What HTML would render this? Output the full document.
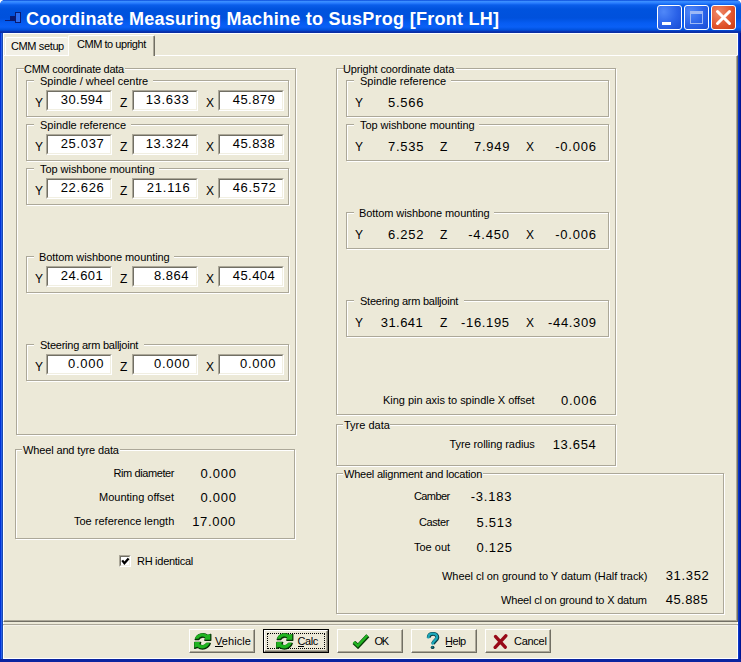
<!DOCTYPE html>
<html><head><meta charset="utf-8"><style>
html,body{margin:0;padding:0;width:741px;height:662px;overflow:hidden;background:#fff}
body{position:relative;font-family:"Liberation Sans",sans-serif}
.t{position:absolute;white-space:pre;font-family:"Liberation Sans",sans-serif}
</style></head><body>
<div style="position:absolute;left:0;top:0;width:741px;height:662px;background:#0A3FD8;border-radius:5px 5px 0 0"></div>
<div style="position:absolute;left:0;top:0;width:741px;height:33px;border-radius:5px 5px 0 0;background:linear-gradient(#0848D8 0px,#3A8EFF 1.5px,#2A7EFF 3px,#0A5EEA 5px,#0053DE 9px,#0051DC 18px,#065CF2 23px,#0A60F6 27px,#0050DC 30px,#0A34B0 31.5px,#0A2C9E 33px)"></div>
<div style="position:absolute;left:0px;top:33px;width:1px;height:629px;background:#0032D8"></div>
<div style="position:absolute;left:1px;top:33px;width:1px;height:629px;background:#2860E8"></div>
<div style="position:absolute;left:2px;top:33px;width:1px;height:629px;background:#1A4AB0"></div>
<div style="position:absolute;left:738px;top:33px;width:1px;height:629px;background:#0A36C8"></div>
<div style="position:absolute;left:739px;top:33px;width:1px;height:629px;background:#0024B0"></div>
<div style="position:absolute;left:740px;top:33px;width:1px;height:629px;background:#001494"></div>
<div style="position:absolute;left:0px;top:659px;width:741px;height:3px;background:#0A24A0"></div>
<div style="position:absolute;left:3px;top:33px;width:735px;height:626px;background:#ECE9D8;border:1px solid #fff;box-sizing:border-box"></div>
<div style="position:absolute;left:5px;top:20px;width:10px;height:1px;background:#0A1A70"></div>
<div style="position:absolute;left:10px;top:16px;width:5px;height:5px;background:#0A1A70"></div>
<div style="position:absolute;left:15px;top:12px;width:6px;height:11px;background:#2B6CF0;border:1px solid #0A1A70;box-sizing:border-box"></div>
<div class="t" style="left:26.00px;top:10px;font-size:18px;line-height:18px;font-weight:700;color:#fff;letter-spacing:0.265px;">Coordinate Measuring Machine to SusProg [Front LH]</div>
<div style="position:absolute;left:657px;top:5px;width:25px;height:25px;background:radial-gradient(circle at 25% 25%,#5088F8,#2A62E8 55%,#1A4CD4);border:1px solid #fff;border-radius:3px;box-sizing:border-box"></div>
<div style="position:absolute;left:684px;top:5px;width:25px;height:25px;background:radial-gradient(circle at 25% 25%,#5088F8,#2A62E8 55%,#1A4CD4);border:1px solid #fff;border-radius:3px;box-sizing:border-box"></div>
<div style="position:absolute;left:711px;top:5px;width:25px;height:25px;background:radial-gradient(circle at 30% 30%,#F08A6A,#E0532B 60%,#C83C14);border:1px solid #fff;border-radius:3px;box-sizing:border-box"></div>
<div style="position:absolute;left:662px;top:22px;width:9px;height:3px;background:#fff"></div>
<div style="position:absolute;left:690px;top:11px;width:13px;height:13px;border:1px solid #9DB8F5;border-top:3px solid #9DB8F5;box-sizing:border-box"></div>
<svg style="position:absolute;left:711px;top:5px" width="25" height="25"><path d="M6.5 6.5 L18.5 18.5 M18.5 6.5 L6.5 18.5" stroke="#fff" stroke-width="3" stroke-linecap="round"/></svg>
<div style="position:absolute;left:3px;top:55px;width:735px;height:567px;border-top:1px solid #fff;border-left:1px solid #fff;border-right:1px solid #716F64;border-bottom:1px solid #716F64;box-sizing:border-box"></div>
<div style="position:absolute;left:4px;top:56px;width:733px;height:565px;border-right:1px solid #ACA899;border-bottom:1px solid #ACA899;box-sizing:border-box"></div>
<div style="position:absolute;left:5px;top:37px;width:63px;height:18px;border-top:1px solid #fff;border-left:1px solid #fff;border-radius:2px 2px 0 0;box-sizing:border-box;background:#F2F0E6"></div>
<div class="t" style="left:11.00px;top:41px;font-size:11px;line-height:11px;letter-spacing:-0.375px;">CMM setup</div>
<div style="position:absolute;left:68px;top:35px;width:87px;height:21px;border-top:1px solid #fff;border-left:1px solid #fff;border-right:1px solid #716F64;box-sizing:border-box;background:#ECE9D8;border-radius:2px 2px 0 0"></div>
<div style="position:absolute;left:153px;top:36px;width:1px;height:20px;background:#ACA899"></div>
<div class="t" style="left:77.00px;top:39px;font-size:11px;line-height:11px;letter-spacing:-0.462px;">CMM to upright</div>
<div style="position:absolute;left:17px;top:69px;width:280px;height:367px;border:1px solid #fff;box-sizing:border-box"></div>
<div style="position:absolute;left:16px;top:68px;width:280px;height:367px;border:1px solid #ACA899;box-sizing:border-box"></div>
<div style="position:absolute;left:24px;top:62px;width:101px;height:13px;background:#ECE9D8"></div>
<div class="t" style="left:24.00px;top:64px;font-size:11px;line-height:11px;letter-spacing:-0.278px;">CMM coordinate data</div>
<div style="position:absolute;left:27px;top:81px;width:263px;height:37px;border:1px solid #fff;box-sizing:border-box"></div>
<div style="position:absolute;left:26px;top:80px;width:263px;height:37px;border:1px solid #ACA899;box-sizing:border-box"></div>
<div style="position:absolute;left:34px;top:75px;width:119px;height:11px;background:#ECE9D8"></div>
<div class="t" style="left:40.00px;top:76px;font-size:11px;line-height:11px;">Spindle / wheel centre</div>
<div class="t" style="left:35.00px;top:97px;font-size:12px;line-height:12px;">Y</div>
<div style="position:absolute;left:46px;top:90px;width:66px;height:21px;background:#fff;border-top:1px solid #ACA899;border-left:1px solid #ACA899;border-right:1px solid #fff;border-bottom:1px solid #fff;box-sizing:border-box"></div>
<div style="position:absolute;left:47px;top:91px;width:64px;height:19px;border-top:1px solid #716F64;border-left:1px solid #716F64;border-right:1px solid #F1EFE2;border-bottom:1px solid #F1EFE2;box-sizing:border-box"></div>
<div class="t" style="left:60.70px;top:93px;font-size:13px;line-height:13px;letter-spacing:0.460px;">30.594</div>
<div class="t" style="left:120.00px;top:97px;font-size:12px;line-height:12px;">Z</div>
<div style="position:absolute;left:132px;top:90px;width:66px;height:21px;background:#fff;border-top:1px solid #ACA899;border-left:1px solid #ACA899;border-right:1px solid #fff;border-bottom:1px solid #fff;box-sizing:border-box"></div>
<div style="position:absolute;left:133px;top:91px;width:64px;height:19px;border-top:1px solid #716F64;border-left:1px solid #716F64;border-right:1px solid #F1EFE2;border-bottom:1px solid #F1EFE2;box-sizing:border-box"></div>
<div class="t" style="left:145.70px;top:93px;font-size:13px;line-height:13px;letter-spacing:0.660px;">13.633</div>
<div class="t" style="left:206.00px;top:97px;font-size:12px;line-height:12px;">X</div>
<div style="position:absolute;left:218px;top:90px;width:66px;height:21px;background:#fff;border-top:1px solid #ACA899;border-left:1px solid #ACA899;border-right:1px solid #fff;border-bottom:1px solid #fff;box-sizing:border-box"></div>
<div style="position:absolute;left:219px;top:91px;width:64px;height:19px;border-top:1px solid #716F64;border-left:1px solid #716F64;border-right:1px solid #F1EFE2;border-bottom:1px solid #F1EFE2;box-sizing:border-box"></div>
<div class="t" style="left:232.70px;top:93px;font-size:13px;line-height:13px;letter-spacing:0.460px;">45.879</div>
<div style="position:absolute;left:27px;top:125px;width:263px;height:37px;border:1px solid #fff;box-sizing:border-box"></div>
<div style="position:absolute;left:26px;top:124px;width:263px;height:37px;border:1px solid #ACA899;box-sizing:border-box"></div>
<div style="position:absolute;left:34px;top:119px;width:97px;height:11px;background:#ECE9D8"></div>
<div class="t" style="left:40.00px;top:120px;font-size:11px;line-height:11px;">Spindle reference</div>
<div class="t" style="left:35.00px;top:141px;font-size:12px;line-height:12px;">Y</div>
<div style="position:absolute;left:46px;top:134px;width:66px;height:21px;background:#fff;border-top:1px solid #ACA899;border-left:1px solid #ACA899;border-right:1px solid #fff;border-bottom:1px solid #fff;box-sizing:border-box"></div>
<div style="position:absolute;left:47px;top:135px;width:64px;height:19px;border-top:1px solid #716F64;border-left:1px solid #716F64;border-right:1px solid #F1EFE2;border-bottom:1px solid #F1EFE2;box-sizing:border-box"></div>
<div class="t" style="left:60.70px;top:137px;font-size:13px;line-height:13px;letter-spacing:0.660px;">25.037</div>
<div class="t" style="left:120.00px;top:141px;font-size:12px;line-height:12px;">Z</div>
<div style="position:absolute;left:132px;top:134px;width:66px;height:21px;background:#fff;border-top:1px solid #ACA899;border-left:1px solid #ACA899;border-right:1px solid #fff;border-bottom:1px solid #fff;box-sizing:border-box"></div>
<div style="position:absolute;left:133px;top:135px;width:64px;height:19px;border-top:1px solid #716F64;border-left:1px solid #716F64;border-right:1px solid #F1EFE2;border-bottom:1px solid #F1EFE2;box-sizing:border-box"></div>
<div class="t" style="left:145.70px;top:137px;font-size:13px;line-height:13px;letter-spacing:0.660px;">13.324</div>
<div class="t" style="left:206.00px;top:141px;font-size:12px;line-height:12px;">X</div>
<div style="position:absolute;left:218px;top:134px;width:66px;height:21px;background:#fff;border-top:1px solid #ACA899;border-left:1px solid #ACA899;border-right:1px solid #fff;border-bottom:1px solid #fff;box-sizing:border-box"></div>
<div style="position:absolute;left:219px;top:135px;width:64px;height:19px;border-top:1px solid #716F64;border-left:1px solid #716F64;border-right:1px solid #F1EFE2;border-bottom:1px solid #F1EFE2;box-sizing:border-box"></div>
<div class="t" style="left:232.70px;top:137px;font-size:13px;line-height:13px;letter-spacing:0.460px;">45.838</div>
<div style="position:absolute;left:27px;top:169px;width:263px;height:37px;border:1px solid #fff;box-sizing:border-box"></div>
<div style="position:absolute;left:26px;top:168px;width:263px;height:37px;border:1px solid #ACA899;box-sizing:border-box"></div>
<div style="position:absolute;left:34px;top:163px;width:125px;height:11px;background:#ECE9D8"></div>
<div class="t" style="left:40.00px;top:164px;font-size:11px;line-height:11px;letter-spacing:-0.050px;">Top wishbone mounting</div>
<div class="t" style="left:35.00px;top:185px;font-size:12px;line-height:12px;">Y</div>
<div style="position:absolute;left:46px;top:178px;width:66px;height:21px;background:#fff;border-top:1px solid #ACA899;border-left:1px solid #ACA899;border-right:1px solid #fff;border-bottom:1px solid #fff;box-sizing:border-box"></div>
<div style="position:absolute;left:47px;top:179px;width:64px;height:19px;border-top:1px solid #716F64;border-left:1px solid #716F64;border-right:1px solid #F1EFE2;border-bottom:1px solid #F1EFE2;box-sizing:border-box"></div>
<div class="t" style="left:60.70px;top:181px;font-size:13px;line-height:13px;letter-spacing:0.660px;">22.626</div>
<div class="t" style="left:120.00px;top:185px;font-size:12px;line-height:12px;">Z</div>
<div style="position:absolute;left:132px;top:178px;width:66px;height:21px;background:#fff;border-top:1px solid #ACA899;border-left:1px solid #ACA899;border-right:1px solid #fff;border-bottom:1px solid #fff;box-sizing:border-box"></div>
<div style="position:absolute;left:133px;top:179px;width:64px;height:19px;border-top:1px solid #716F64;border-left:1px solid #716F64;border-right:1px solid #F1EFE2;border-bottom:1px solid #F1EFE2;box-sizing:border-box"></div>
<div class="t" style="left:146.70px;top:181px;font-size:13px;line-height:13px;letter-spacing:0.860px;">21.116</div>
<div class="t" style="left:206.00px;top:185px;font-size:12px;line-height:12px;">X</div>
<div style="position:absolute;left:218px;top:178px;width:66px;height:21px;background:#fff;border-top:1px solid #ACA899;border-left:1px solid #ACA899;border-right:1px solid #fff;border-bottom:1px solid #fff;box-sizing:border-box"></div>
<div style="position:absolute;left:219px;top:179px;width:64px;height:19px;border-top:1px solid #716F64;border-left:1px solid #716F64;border-right:1px solid #F1EFE2;border-bottom:1px solid #F1EFE2;box-sizing:border-box"></div>
<div class="t" style="left:232.70px;top:181px;font-size:13px;line-height:13px;letter-spacing:0.660px;">46.572</div>
<div style="position:absolute;left:27px;top:257px;width:263px;height:37px;border:1px solid #fff;box-sizing:border-box"></div>
<div style="position:absolute;left:26px;top:256px;width:263px;height:37px;border:1px solid #ACA899;box-sizing:border-box"></div>
<div style="position:absolute;left:34px;top:251px;width:140px;height:11px;background:#ECE9D8"></div>
<div class="t" style="left:39.00px;top:252px;font-size:11px;line-height:11px;letter-spacing:-0.087px;">Bottom wishbone mounting</div>
<div class="t" style="left:35.00px;top:273px;font-size:12px;line-height:12px;">Y</div>
<div style="position:absolute;left:46px;top:266px;width:66px;height:21px;background:#fff;border-top:1px solid #ACA899;border-left:1px solid #ACA899;border-right:1px solid #fff;border-bottom:1px solid #fff;box-sizing:border-box"></div>
<div style="position:absolute;left:47px;top:267px;width:64px;height:19px;border-top:1px solid #716F64;border-left:1px solid #716F64;border-right:1px solid #F1EFE2;border-bottom:1px solid #F1EFE2;box-sizing:border-box"></div>
<div class="t" style="left:60.70px;top:269px;font-size:13px;line-height:13px;letter-spacing:0.460px;">24.601</div>
<div class="t" style="left:120.00px;top:273px;font-size:12px;line-height:12px;">Z</div>
<div style="position:absolute;left:132px;top:266px;width:66px;height:21px;background:#fff;border-top:1px solid #ACA899;border-left:1px solid #ACA899;border-right:1px solid #fff;border-bottom:1px solid #fff;box-sizing:border-box"></div>
<div style="position:absolute;left:133px;top:267px;width:64px;height:19px;border-top:1px solid #716F64;border-left:1px solid #716F64;border-right:1px solid #F1EFE2;border-bottom:1px solid #F1EFE2;box-sizing:border-box"></div>
<div class="t" style="left:153.90px;top:269px;font-size:13px;line-height:13px;letter-spacing:0.525px;">8.864</div>
<div class="t" style="left:206.00px;top:273px;font-size:12px;line-height:12px;">X</div>
<div style="position:absolute;left:218px;top:266px;width:66px;height:21px;background:#fff;border-top:1px solid #ACA899;border-left:1px solid #ACA899;border-right:1px solid #fff;border-bottom:1px solid #fff;box-sizing:border-box"></div>
<div style="position:absolute;left:219px;top:267px;width:64px;height:19px;border-top:1px solid #716F64;border-left:1px solid #716F64;border-right:1px solid #F1EFE2;border-bottom:1px solid #F1EFE2;box-sizing:border-box"></div>
<div class="t" style="left:232.70px;top:269px;font-size:13px;line-height:13px;letter-spacing:0.460px;">45.404</div>
<div style="position:absolute;left:27px;top:345px;width:263px;height:37px;border:1px solid #fff;box-sizing:border-box"></div>
<div style="position:absolute;left:26px;top:344px;width:263px;height:37px;border:1px solid #ACA899;box-sizing:border-box"></div>
<div style="position:absolute;left:34px;top:339px;width:110px;height:11px;background:#ECE9D8"></div>
<div class="t" style="left:40.00px;top:340px;font-size:11px;line-height:11px;letter-spacing:-0.238px;">Steering arm balljoint</div>
<div class="t" style="left:35.00px;top:361px;font-size:12px;line-height:12px;">Y</div>
<div style="position:absolute;left:46px;top:354px;width:66px;height:21px;background:#fff;border-top:1px solid #ACA899;border-left:1px solid #ACA899;border-right:1px solid #fff;border-bottom:1px solid #fff;box-sizing:border-box"></div>
<div style="position:absolute;left:47px;top:355px;width:64px;height:19px;border-top:1px solid #716F64;border-left:1px solid #716F64;border-right:1px solid #F1EFE2;border-bottom:1px solid #F1EFE2;box-sizing:border-box"></div>
<div class="t" style="left:67.90px;top:357px;font-size:13px;line-height:13px;letter-spacing:0.775px;">0.000</div>
<div class="t" style="left:120.00px;top:361px;font-size:12px;line-height:12px;">Z</div>
<div style="position:absolute;left:132px;top:354px;width:66px;height:21px;background:#fff;border-top:1px solid #ACA899;border-left:1px solid #ACA899;border-right:1px solid #fff;border-bottom:1px solid #fff;box-sizing:border-box"></div>
<div style="position:absolute;left:133px;top:355px;width:64px;height:19px;border-top:1px solid #716F64;border-left:1px solid #716F64;border-right:1px solid #F1EFE2;border-bottom:1px solid #F1EFE2;box-sizing:border-box"></div>
<div class="t" style="left:153.90px;top:357px;font-size:13px;line-height:13px;letter-spacing:0.775px;">0.000</div>
<div class="t" style="left:206.00px;top:361px;font-size:12px;line-height:12px;">X</div>
<div style="position:absolute;left:218px;top:354px;width:66px;height:21px;background:#fff;border-top:1px solid #ACA899;border-left:1px solid #ACA899;border-right:1px solid #fff;border-bottom:1px solid #fff;box-sizing:border-box"></div>
<div style="position:absolute;left:219px;top:355px;width:64px;height:19px;border-top:1px solid #716F64;border-left:1px solid #716F64;border-right:1px solid #F1EFE2;border-bottom:1px solid #F1EFE2;box-sizing:border-box"></div>
<div class="t" style="left:239.90px;top:357px;font-size:13px;line-height:13px;letter-spacing:0.775px;">0.000</div>
<div style="position:absolute;left:337px;top:69px;width:280px;height:347px;border:1px solid #fff;box-sizing:border-box"></div>
<div style="position:absolute;left:336px;top:68px;width:280px;height:347px;border:1px solid #ACA899;box-sizing:border-box"></div>
<div style="position:absolute;left:344px;top:62px;width:112px;height:13px;background:#ECE9D8"></div>
<div class="t" style="left:343.00px;top:64px;font-size:11px;line-height:11px;letter-spacing:-0.136px;">Upright coordinate data</div>
<div style="position:absolute;left:347px;top:81px;width:263px;height:37px;border:1px solid #fff;box-sizing:border-box"></div>
<div style="position:absolute;left:346px;top:80px;width:263px;height:37px;border:1px solid #ACA899;box-sizing:border-box"></div>
<div style="position:absolute;left:354px;top:75px;width:97px;height:11px;background:#ECE9D8"></div>
<div class="t" style="left:360.00px;top:76px;font-size:11px;line-height:11px;">Spindle reference</div>
<div class="t" style="left:355.00px;top:97px;font-size:12px;line-height:12px;">Y</div>
<div class="t" style="left:387.90px;top:96px;font-size:13px;line-height:13px;letter-spacing:0.775px;">5.566</div>
<div style="position:absolute;left:347px;top:125px;width:263px;height:37px;border:1px solid #fff;box-sizing:border-box"></div>
<div style="position:absolute;left:346px;top:124px;width:263px;height:37px;border:1px solid #ACA899;box-sizing:border-box"></div>
<div style="position:absolute;left:354px;top:119px;width:125px;height:11px;background:#ECE9D8"></div>
<div class="t" style="left:360.00px;top:120px;font-size:11px;line-height:11px;letter-spacing:-0.050px;">Top wishbone mounting</div>
<div class="t" style="left:355.00px;top:141px;font-size:12px;line-height:12px;">Y</div>
<div class="t" style="left:387.90px;top:140px;font-size:13px;line-height:13px;letter-spacing:0.775px;">7.535</div>
<div class="t" style="left:440.00px;top:141px;font-size:12px;line-height:12px;">Z</div>
<div class="t" style="left:473.90px;top:140px;font-size:13px;line-height:13px;letter-spacing:0.775px;">7.949</div>
<div class="t" style="left:526.00px;top:141px;font-size:12px;line-height:12px;">X</div>
<div class="t" style="left:555.30px;top:140px;font-size:13px;line-height:13px;letter-spacing:0.740px;">-0.006</div>
<div style="position:absolute;left:347px;top:213px;width:263px;height:37px;border:1px solid #fff;box-sizing:border-box"></div>
<div style="position:absolute;left:346px;top:212px;width:263px;height:37px;border:1px solid #ACA899;box-sizing:border-box"></div>
<div style="position:absolute;left:354px;top:207px;width:140px;height:11px;background:#ECE9D8"></div>
<div class="t" style="left:359.00px;top:208px;font-size:11px;line-height:11px;letter-spacing:-0.087px;">Bottom wishbone mounting</div>
<div class="t" style="left:355.00px;top:229px;font-size:12px;line-height:12px;">Y</div>
<div class="t" style="left:387.90px;top:228px;font-size:13px;line-height:13px;letter-spacing:0.775px;">6.252</div>
<div class="t" style="left:440.00px;top:229px;font-size:12px;line-height:12px;">Z</div>
<div class="t" style="left:468.30px;top:228px;font-size:13px;line-height:13px;letter-spacing:0.740px;">-4.450</div>
<div class="t" style="left:526.00px;top:229px;font-size:12px;line-height:12px;">X</div>
<div class="t" style="left:555.30px;top:228px;font-size:13px;line-height:13px;letter-spacing:0.740px;">-0.006</div>
<div style="position:absolute;left:347px;top:301px;width:263px;height:37px;border:1px solid #fff;box-sizing:border-box"></div>
<div style="position:absolute;left:346px;top:300px;width:263px;height:37px;border:1px solid #ACA899;box-sizing:border-box"></div>
<div style="position:absolute;left:354px;top:295px;width:110px;height:11px;background:#ECE9D8"></div>
<div class="t" style="left:360.00px;top:296px;font-size:11px;line-height:11px;letter-spacing:-0.238px;">Steering arm balljoint</div>
<div class="t" style="left:355.00px;top:317px;font-size:12px;line-height:12px;">Y</div>
<div class="t" style="left:380.70px;top:316px;font-size:13px;line-height:13px;letter-spacing:0.460px;">31.641</div>
<div class="t" style="left:440.00px;top:317px;font-size:12px;line-height:12px;">Z</div>
<div class="t" style="left:461.10px;top:316px;font-size:13px;line-height:13px;letter-spacing:0.650px;">-16.195</div>
<div class="t" style="left:526.00px;top:317px;font-size:12px;line-height:12px;">X</div>
<div class="t" style="left:548.10px;top:316px;font-size:13px;line-height:13px;letter-spacing:0.650px;">-44.309</div>
<div class="t" style="left:383.00px;top:395px;font-size:11px;line-height:11px;letter-spacing:-0.031px;">King pin axis to spindle X offset</div>
<div class="t" style="left:560.90px;top:394px;font-size:13px;line-height:13px;letter-spacing:0.775px;">0.006</div>
<div style="position:absolute;left:337px;top:425px;width:280px;height:42px;border:1px solid #fff;box-sizing:border-box"></div>
<div style="position:absolute;left:336px;top:424px;width:280px;height:42px;border:1px solid #ACA899;box-sizing:border-box"></div>
<div style="position:absolute;left:343px;top:418px;width:47px;height:12px;background:#ECE9D8"></div>
<div class="t" style="left:344.00px;top:420px;font-size:11px;line-height:11px;">Tyre data</div>
<div class="t" style="left:449.50px;top:439px;font-size:11px;line-height:11px;letter-spacing:-0.083px;">Tyre rolling radius</div>
<div class="t" style="left:552.70px;top:438px;font-size:13px;line-height:13px;letter-spacing:0.660px;">13.654</div>
<div style="position:absolute;left:337px;top:474px;width:388px;height:141px;border:1px solid #fff;box-sizing:border-box"></div>
<div style="position:absolute;left:336px;top:473px;width:388px;height:141px;border:1px solid #ACA899;box-sizing:border-box"></div>
<div style="position:absolute;left:343px;top:467px;width:140px;height:12px;background:#ECE9D8"></div>
<div class="t" style="left:344.00px;top:469px;font-size:11px;line-height:11px;letter-spacing:-0.222px;">Wheel alignment and location</div>
<div class="t" style="left:414.00px;top:491px;font-size:11px;line-height:11px;letter-spacing:-0.600px;">Camber</div>
<div class="t" style="left:470.80px;top:490px;font-size:13px;line-height:13px;letter-spacing:0.740px;">-3.183</div>
<div class="t" style="left:419.00px;top:517px;font-size:11px;line-height:11px;letter-spacing:-0.400px;">Caster</div>
<div class="t" style="left:476.40px;top:516px;font-size:13px;line-height:13px;letter-spacing:0.775px;">5.513</div>
<div class="t" style="left:414.00px;top:542px;font-size:11px;line-height:11px;">Toe out</div>
<div class="t" style="left:476.40px;top:541px;font-size:13px;line-height:13px;letter-spacing:0.775px;">0.125</div>
<div class="t" style="left:442.00px;top:571px;font-size:11px;line-height:11px;letter-spacing:-0.049px;">Wheel cl on ground to Y datum (Half track)</div>
<div class="t" style="left:665.70px;top:569px;font-size:13px;line-height:13px;letter-spacing:0.660px;">31.352</div>
<div class="t" style="left:501.00px;top:595px;font-size:11px;line-height:11px;letter-spacing:-0.179px;">Wheel cl on ground to X datum</div>
<div class="t" style="left:665.70px;top:593px;font-size:13px;line-height:13px;letter-spacing:0.460px;">45.885</div>
<div style="position:absolute;left:16px;top:450px;width:280px;height:90px;border:1px solid #fff;box-sizing:border-box"></div>
<div style="position:absolute;left:15px;top:449px;width:280px;height:90px;border:1px solid #ACA899;box-sizing:border-box"></div>
<div style="position:absolute;left:22px;top:443px;width:98px;height:12px;background:#ECE9D8"></div>
<div class="t" style="left:23.00px;top:445px;font-size:11px;line-height:11px;letter-spacing:-0.139px;">Wheel and tyre data</div>
<div class="t" style="left:113.50px;top:468px;font-size:11px;line-height:11px;letter-spacing:-0.409px;">Rim diameter</div>
<div class="t" style="left:200.40px;top:467px;font-size:13px;line-height:13px;letter-spacing:0.775px;">0.000</div>
<div class="t" style="left:99.00px;top:492px;font-size:11px;line-height:11px;">Mounting offset</div>
<div class="t" style="left:200.40px;top:491px;font-size:13px;line-height:13px;letter-spacing:0.775px;">0.000</div>
<div class="t" style="left:74.00px;top:516px;font-size:11px;line-height:11px;">Toe reference length</div>
<div class="t" style="left:192.20px;top:515px;font-size:13px;line-height:13px;letter-spacing:0.660px;">17.000</div>
<div style="position:absolute;left:119px;top:555px;width:12px;height:12px;background:#fff;border-top:1px solid #ACA899;border-left:1px solid #ACA899;border-right:1px solid #fff;border-bottom:1px solid #fff;box-sizing:border-box"></div>
<div style="position:absolute;left:120px;top:556px;width:10px;height:10px;border-top:1px solid #716F64;border-left:1px solid #716F64;border-right:1px solid #F1EFE2;border-bottom:1px solid #F1EFE2;box-sizing:border-box"></div>
<svg style="position:absolute;left:119px;top:555px" width="12" height="12"><path d="M3.2 5.4 L5.4 8.2 L9.6 3.4" stroke="#000" stroke-width="2.3" fill="none"/></svg>
<div class="t" style="left:137.00px;top:556px;font-size:11px;line-height:11px;letter-spacing:-0.273px;">RH identical</div>
<div style="position:absolute;left:3px;top:624px;width:735px;height:1px;background:#ACA899"></div>
<div style="position:absolute;left:3px;top:625px;width:735px;height:1px;background:#F4F2EA"></div>
<div style="position:absolute;left:189px;top:629px;width:66px;height:24px;background:#ECE9D8;border-top:1px solid #fff;border-left:1px solid #fff;border-right:1px solid #716F64;border-bottom:1px solid #716F64;box-sizing:border-box"></div>
<div style="position:absolute;left:190px;top:630px;width:64px;height:22px;border-right:1px solid #ACA899;border-bottom:1px solid #ACA899;box-sizing:border-box"></div>
<svg style="position:absolute;left:194px;top:633px" width="18" height="18" viewBox="0 0 18 18"><defs><path id="ra" d="M1.3 6.4 A7.9 7.9 0 0 1 13.8 2.6 L16.7 1.5 L16.7 7.3 L10.9 7.3 L11.8 5.2 A4.6 4.6 0 0 0 4.8 6.4 Z"/></defs><g fill="#062E06" stroke="#062E06" stroke-width="1.5" stroke-linejoin="round"><use href="#ra"/><use href="#ra" transform="rotate(180 8.75 8.4)"/></g><g fill="#20B420" transform="translate(-0.45 -0.55)"><use href="#ra"/><use href="#ra" transform="rotate(180 8.75 8.4)"/></g></svg>
<div class="t" style="left:215.00px;top:636px;font-size:11px;line-height:11px;letter-spacing:0.067px;">Vehicle</div>
<div style="position:absolute;left:215px;top:646px;width:8px;height:1px;background:#000"></div>
<div style="position:absolute;left:263px;top:629px;width:66px;height:24px;background:#ECE9D8;border:1px solid #000;box-sizing:border-box"></div>
<div style="position:absolute;left:264px;top:630px;width:64px;height:22px;border-top:1px solid #fff;border-left:1px solid #fff;border-right:1px solid #716F64;border-bottom:1px solid #716F64;box-sizing:border-box"></div>
<div style="position:absolute;left:265px;top:631px;width:62px;height:20px;border-right:1px solid #ACA899;border-bottom:1px solid #ACA899;box-sizing:border-box"></div>
<div style="position:absolute;left:267px;top:633px;width:58px;height:16px;border:1px dotted #000;box-sizing:border-box"></div>
<svg style="position:absolute;left:276px;top:633px" width="18" height="18" viewBox="0 0 18 18"><defs><path id="ra" d="M1.3 6.4 A7.9 7.9 0 0 1 13.8 2.6 L16.7 1.5 L16.7 7.3 L10.9 7.3 L11.8 5.2 A4.6 4.6 0 0 0 4.8 6.4 Z"/></defs><g fill="#062E06" stroke="#062E06" stroke-width="1.5" stroke-linejoin="round"><use href="#ra"/><use href="#ra" transform="rotate(180 8.75 8.4)"/></g><g fill="#20B420" transform="translate(-0.45 -0.55)"><use href="#ra"/><use href="#ra" transform="rotate(180 8.75 8.4)"/></g></svg>
<div class="t" style="left:297.50px;top:636px;font-size:11px;line-height:11px;letter-spacing:-0.400px;">Calc</div>
<div style="position:absolute;left:298px;top:646px;width:6px;height:1px;background:#000"></div>
<div style="position:absolute;left:337px;top:629px;width:66px;height:24px;background:#ECE9D8;border-top:1px solid #fff;border-left:1px solid #fff;border-right:1px solid #716F64;border-bottom:1px solid #716F64;box-sizing:border-box"></div>
<div style="position:absolute;left:338px;top:630px;width:64px;height:22px;border-right:1px solid #ACA899;border-bottom:1px solid #ACA899;box-sizing:border-box"></div>
<svg style="position:absolute;left:351px;top:633px" width="19" height="16" viewBox="0 0 19 16"><path d="M3 9.4 L7 13.2 L16.8 2.8" fill="none" stroke="#073A07" stroke-width="4.2" stroke-linejoin="miter"/><path d="M2.7 8.9 L6.8 12.6 L16.4 2.4" fill="none" stroke="#22B422" stroke-width="2.6"/></svg>
<div class="t" style="left:374.50px;top:636px;font-size:11px;line-height:11px;letter-spacing:-1.400px;">OK</div>
<div style="position:absolute;left:411px;top:629px;width:66px;height:24px;background:#ECE9D8;border-top:1px solid #fff;border-left:1px solid #fff;border-right:1px solid #716F64;border-bottom:1px solid #716F64;box-sizing:border-box"></div>
<div style="position:absolute;left:412px;top:630px;width:64px;height:22px;border-right:1px solid #ACA899;border-bottom:1px solid #ACA899;box-sizing:border-box"></div>
<svg style="position:absolute;left:426px;top:632px" width="14" height="18" viewBox="0 0 14 18"><path d="M2.4 5.4 C2.4 2.6 4.6 1.6 6.8 1.6 C9.6 1.6 11.2 3.2 11 5.4 C10.8 7.6 7.6 8.6 6.6 11.6" fill="none" stroke="#073E46" stroke-width="3.9" transform="translate(0.3 0.3)"/><path d="M2.4 5.4 C2.4 2.6 4.6 1.6 6.8 1.6 C9.6 1.6 11.2 3.2 11 5.4 C10.8 7.6 7.6 8.6 6.6 11.6" fill="none" stroke="#1CA8BA" stroke-width="2.4" stroke-linecap="round"/><ellipse cx="6.6" cy="15.4" rx="1.9" ry="1.6" fill="#073E46"/><ellipse cx="6.2" cy="15" rx="0.8" ry="0.6" fill="#2AB8C8"/></svg>
<div class="t" style="left:445.00px;top:636px;font-size:11px;line-height:11px;letter-spacing:-0.467px;">Help</div>
<div style="position:absolute;left:446px;top:646px;width:6px;height:1px;background:#000"></div>
<div style="position:absolute;left:485px;top:629px;width:66px;height:24px;background:#ECE9D8;border-top:1px solid #fff;border-left:1px solid #fff;border-right:1px solid #716F64;border-bottom:1px solid #716F64;box-sizing:border-box"></div>
<div style="position:absolute;left:486px;top:630px;width:64px;height:22px;border-right:1px solid #ACA899;border-bottom:1px solid #ACA899;box-sizing:border-box"></div>
<svg style="position:absolute;left:493px;top:634px" width="15" height="15" viewBox="0 0 15 15"><path d="M2.6 2.6 L12.2 13.2 M12.8 1.8 L2.2 13.4" stroke="#980A18" stroke-width="3.4" stroke-linecap="round"/></svg>
<div class="t" style="left:514.00px;top:636px;font-size:11px;line-height:11px;letter-spacing:-0.280px;">Cancel</div>
</body></html>
